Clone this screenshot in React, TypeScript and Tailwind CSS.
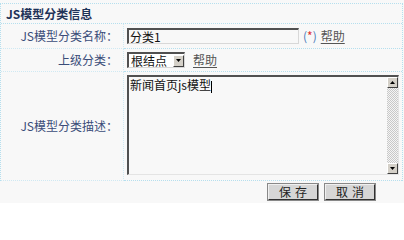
import React from "react";

const font = { fontFamily: '"Noto Sans CJK SC", "Liberation Sans", sans-serif' };

function ArrowBtn({ dir, h = 11 }: { dir: "up" | "down"; h?: number }) {
  return (
    <div
      className={`w-[11px] ${h === 11 ? "h-[11px]" : "h-[12px]"} bg-[#d4d0c8] border border-t-white border-l-white border-r-[#404040] border-b-[#404040] flex items-center justify-center`}
    >
      <svg width="5" height="3" viewBox="0 0 5 3">
        {dir === "up" ? (
          <polygon points="2.5,0 5,3 0,3" fill="#000" />
        ) : (
          <polygon points="0,0 5,0 2.5,3" fill="#000" />
        )}
      </svg>
    </div>
  );
}

function Help({ className = "" }: { className?: string }) {
  return <span className={`text-[#555] underline underline-offset-2 ${className}`}>帮助</span>;
}

export default function App() {
  return (
    <div className="w-[404px] h-[203px] bg-[#f8f8f8] text-[12px] leading-none pt-[3px]" style={font}>
      <div className="w-[403px] border-l border-r border-t border-dotted border-[#b5dfee]">
        <div className="h-[20px] flex items-center pl-[5px] font-bold text-[#1f3358] border-b border-dotted border-[#b5dfee]">
          JS模型分类信息
        </div>
        <div className="grid grid-cols-[123px_1fr]">
          {/* Row 1 */}
          <div className="h-[25px] flex items-center justify-end pr-[5px] text-[#3a4c78] border-r border-b border-dotted border-[#cfe9f3]">
            JS模型分类名称：
          </div>
          <div className="h-[25px] flex items-center pl-[3px] border-b border-dotted border-[#b5dfee]">
            <div className="w-[172px] h-[16px] bg-[#f8f8f8] border-t-2 border-l-2 border-r border-b border-t-[#505050] border-l-[#505050] border-r-[#d8d8d8] border-b-[#d8d8d8] flex items-center pl-[1px] text-[#111]">
              分类1
            </div>
            <span className="ml-[4px] text-[#4a7ab8]">
              (<span className="text-[#e03030]">*</span>)
            </span>
            <Help className="ml-[4px]" />
          </div>
          {/* Row 2 */}
          <div className="h-[23px] flex items-center justify-end pr-[5px] text-[#3a4c78] border-r border-b border-dotted border-[#cfe9f3]">
            上级分类：
          </div>
          <div className="h-[23px] flex items-center pl-[3px] border-b border-dotted border-[#b5dfee]">
            <div className="w-[58px] h-[16px] bg-white border-t-2 border-l-2 border-r border-b border-t-[#505050] border-l-[#505050] border-r-[#d8d8d8] border-b-[#d8d8d8] flex items-center justify-between text-[#111]">
              <span className="pl-[2px]">根结点</span>
              <ArrowBtn dir="down" h={12} />
            </div>
            <Help className="ml-[8px]" />
          </div>
          {/* Row 3 */}
          <div className="h-[109px] flex items-center justify-end pr-[5px] text-[#3a4c78] border-r border-b border-dotted border-[#cfe9f3]">
            JS模型分类描述：
          </div>
          <div className="h-[109px] pl-[3px] pt-[3px] border-b border-dotted border-[#b5dfee]">
            <div className="w-[272px] h-[100px] bg-[#f8f8f8] border-t-2 border-l-2 border-r border-b border-t-[#505050] border-l-[#505050] border-r-[#e4e4e4] border-b-[#e4e4e4] flex">
              <div className="flex-1 pl-[1px] pt-[2px] text-[#111]">
                新闻首页js模型<span className="inline-block w-[1px] h-[12px] bg-black align-middle" />
              </div>
              <div className="w-[11px] h-full flex flex-col justify-between bg-[repeating-conic-gradient(#f4f4f4_0_25%,#c8c8c8_0_50%)] bg-[length:2px_2px]">
                <ArrowBtn dir="up" />
                <ArrowBtn dir="down" />
              </div>
            </div>
          </div>
        </div>
      </div>
      <div className="flex pl-[268px] pt-[3px] gap-[7px]">
        <div className="w-[50px] h-[16px] bg-[#d6d6d6] border border-t-[#f0f0f0] border-l-[#f0f0f0] border-r-[#303030] border-b-[#303030] shadow-[0_0_0_1px_#888] flex items-center justify-center text-[#222] tracking-[4px] pl-[4px]">
          保存
        </div>
        <div className="w-[50px] h-[16px] bg-[#d6d6d6] border border-t-[#f0f0f0] border-l-[#f0f0f0] border-r-[#303030] border-b-[#303030] shadow-[0_0_0_1px_#888] flex items-center justify-center text-[#222] tracking-[4px] pl-[4px]">
          取消
        </div>
      </div>
    </div>
  );
}
